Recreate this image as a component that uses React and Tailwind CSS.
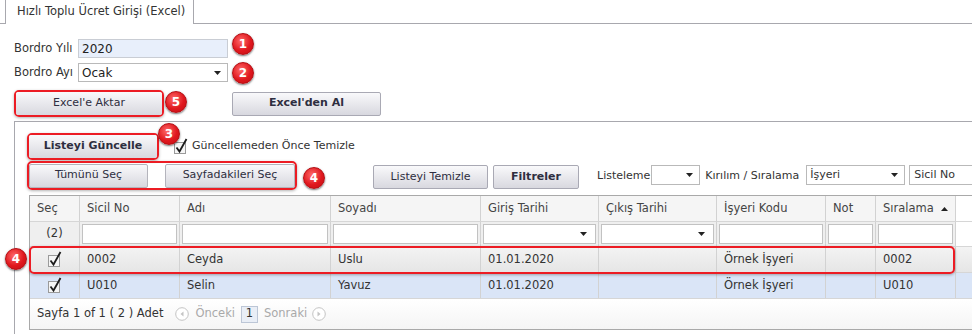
import clsx from "clsx";

const font = { fontFamily: '"DejaVu Sans", Verdana, sans-serif' };

function Badge({ n, className }) {
  return (
    <div
      className={clsx(
        "absolute z-10 flex h-[22px] w-[22px] items-center justify-center rounded-full border border-[#b30d12] bg-[radial-gradient(circle_at_40%_35%,#ff6a6a,#e0181e_55%,#c10f14)] text-[12px] font-bold text-white shadow-[0_1px_2px_rgba(0,0,0,0.55)]",
        className
      )}
    >
      {n}
    </div>
  );
}

function Btn({ className, bold, children }) {
  return (
    <div
      className={clsx(
        "flex shrink-0 items-center justify-center whitespace-nowrap rounded-[2px] border border-[#a9a9b4] bg-gradient-to-b from-[#f9f9fb] to-[#d8d8df] text-[11px] text-[#2e2e40]",
        bold && "font-bold",
        className
      )}
    >
      {children}
    </div>
  );
}

function RedBox({ className, children }) {
  return (
    <div
      className={clsx(
        "relative shrink-0 rounded-[5px] border-2 border-[#ec1c24] shadow-[0_1px_3px_rgba(0,0,0,0.3)]",
        className
      )}
    >
      {children}
    </div>
  );
}

function Arrow({ up }) {
  return (
    <svg width="7" height="4" viewBox="0 0 7 4" className="shrink-0">
      <path d={up ? "M0 4 L3.5 0 L7 4 Z" : "M0 0 L7 0 L3.5 4 Z"} fill="#222" />
    </svg>
  );
}

function Check() {
  return (
    <svg width="16" height="17" viewBox="0 0 16 17" className="shrink-0">
      <rect x="1.5" y="4.5" width="11" height="11" fill="#f6f6f6" stroke="#9a9a9a" />
      <path d="M3.5 9.5 L6.5 13.5 L13.5 1" fill="none" stroke="#1d1d1d" strokeWidth="1.8" />
    </svg>
  );
}

function NavCircle({ right }) {
  return (
    <svg width="14" height="14" viewBox="0 0 14 14">
      <circle cx="7" cy="7" r="6.3" fill="#fff" stroke="#c4c4c4" />
      <path d={right ? "M5.5 4.5 L8.5 7 L5.5 9.5 Z" : "M8.5 4.5 L5.5 7 L8.5 9.5 Z"} fill="#c4c4c4" />
    </svg>
  );
}

const cols = [
  { key: "sec", label: "Seç", w: "w-[50px]" },
  { key: "sicil", label: "Sicil No", w: "w-[100px]" },
  { key: "adi", label: "Adı", w: "w-[151px]" },
  { key: "soyadi", label: "Soyadı", w: "w-[150px]" },
  { key: "giris", label: "Giriş Tarihi", w: "w-[118px]", drop: true },
  { key: "cikis", label: "Çıkış Tarihi", w: "w-[118px]", drop: true },
  { key: "isyeri", label: "İşyeri Kodu", w: "w-[109px]" },
  { key: "not", label: "Not", w: "w-[50px]" },
  { key: "siralama", label: "Sıralama", w: "w-[80px]", sort: true },
];

const rows = [
  { sicil: "0002", adi: "Ceyda", soyadi: "Uslu", giris: "01.01.2020", cikis: "", isyeri: "Örnek İşyeri", not: "", siralama: "0002" },
  { sicil: "U010", adi: "Selin", soyadi: "Yavuz", giris: "01.01.2020", cikis: "", isyeri: "Örnek İşyeri", not: "", siralama: "U010" },
];

function GridRow({ row, className }) {
  return (
    <div className={clsx("flex h-[26px] border-b border-[#d6d6d6]", className)}>
      {cols.map((c) => (
        <div
          key={c.key}
          className={clsx(
            "flex shrink-0 items-center border-r border-[#d2d2d2] text-[11.5px] text-[#333]",
            c.w,
            c.key === "sec" ? "justify-center" : "pl-[7px]"
          )}
        >
          {c.key === "sec" ? <Check /> : row[c.key]}
        </div>
      ))}
    </div>
  );
}

export default function App() {
  return (
    <div className="h-[334px] w-[972px] overflow-hidden bg-white text-[11.5px] text-[#333]" style={font}>
      {/* tab strip */}
      <div className="flex h-[24px] border-b border-[#a8a8ae] pl-[5px]">
        <div className="-mb-px flex h-[24px] w-[189px] items-center border border-b-0 border-t-0 border-[#a8a8ae] bg-white pl-[11px] text-[11.5px] text-[#333]">
          Hızlı Toplu Ücret Girişi (Excel)
        </div>
      </div>

      <div className="pl-[14px] pt-[15px]">
        {/* Bordro Yılı */}
        <div className="flex h-[19px] items-center">
          <div className="w-[64px]">Bordro Yılı</div>
          <div className="relative flex h-[19px] w-[150px] items-center border border-[#c9cdd4] bg-[#e8effb] pl-[3px] text-[12px] text-[#222]">
            2020
            <Badge n="1" className="left-[153px] top-[-7px]" />
          </div>
        </div>
        {/* Bordro Ayı */}
        <div className="mt-[5px] flex h-[19px] items-center">
          <div className="w-[64px]">Bordro Ayı</div>
          <div className="relative flex h-[19px] w-[150px] items-center justify-between border border-[#b9b9b9] bg-white pl-[3px] pr-[6px] text-[12px] text-[#222]">
            Ocak
            <Arrow />
            <Badge n="2" className="left-[153px] top-[-2px]" />
          </div>
        </div>
        {/* Excel buttons */}
        <div className="mt-[8px] flex h-[27px] items-center">
          <RedBox className="h-[27px] w-[150px]">
            <Btn className="h-full w-full border-0">Excel'e Aktar</Btn>
            <Badge n="5" className="left-[149px] top-[-1px]" />
          </RedBox>
          <Btn bold className="ml-[68px] h-[24px] w-[149px]">Excel'den Al</Btn>
        </div>

        {/* panel */}
        <div className="mt-[4px] h-[220px] border-l border-t border-[#a8a8ae] pl-[12px] pt-[11px]">
          <div className="flex h-[27px] items-center">
            <RedBox className="h-[27px] w-[132px]">
              <Btn bold className="h-full w-full border-0">Listeyi Güncelle</Btn>
              <Badge n="3" className="left-[129px] top-[-12px]" />
            </RedBox>
            <div className="ml-[14px] flex items-center">
              <Check />
              <span className="ml-[3px] text-[11px] text-[#333]">Güncellemeden Önce Temizle</span>
            </div>
          </div>

          <div className="mt-[1px] flex h-[29px] items-start whitespace-nowrap text-[11px]">
            <RedBox className="flex h-[29px] w-[270px] items-center gap-[17px]">
              <Btn className="h-[24px] w-[119px] border-[#b4b4bc]">Tümünü Seç</Btn>
              <Btn className="h-[24px] w-[130px] border-[#b4b4bc]">Sayfadakileri Seç</Btn>
              <Badge n="4" className="left-[274px] top-[4px]" />
            </RedBox>
            <Btn className="ml-[76px] mt-[4px] h-[24px] w-[115px]">Listeyi Temizle</Btn>
            <Btn bold className="ml-[5px] mt-[4px] h-[24px] w-[86px]">Filtreler</Btn>
            <div className="ml-[18px] mt-[7px] shrink-0">Listeleme</div>
            <div className="ml-[1px] mt-[4px] flex h-[20px] w-[49px] shrink-0 items-center justify-end border border-[#b9b9b9] bg-white pr-[6px]">
              <Arrow />
            </div>
            <div className="ml-[5px] mt-[7px] shrink-0">Kırılım / Sıralama</div>
            <div className="ml-[7px] mt-[4px] flex h-[20px] w-[99px] shrink-0 items-center justify-between border border-[#b9b9b9] bg-white pl-[3px] pr-[6px]">
              İşyeri
              <Arrow />
            </div>
            <div className="ml-[4px] mt-[4px] flex h-[20px] w-[80px] shrink-0 items-center border border-[#b9b9b9] bg-white pl-[4px]">
              Sicil No
            </div>
          </div>

          {/* grid */}
          <div className="ml-[2px] mt-[5px] border-b border-l border-t border-[#a9a9a9]">
            <div className="flex h-[26px] border-b border-[#d6d6d6]">
              {cols.map((c) => (
                <div
                  key={c.key}
                  className={clsx(
                    "flex shrink-0 items-center justify-between border-r border-[#d2d2d2] bg-[#f5f5f5] pl-[7px] pr-[7px] text-[11.5px] text-[#444]",
                    c.w
                  )}
                >
                  {c.label}
                  {c.sort && <Arrow up />}
                </div>
              ))}
            </div>
            <div className="flex h-[25px] border-b border-[#d6d6d6]">
              {cols.map((c) => (
                <div
                  key={c.key}
                  className={clsx(
                    "flex shrink-0 items-center border-r border-[#d2d2d2] bg-[#efefef]",
                    c.w,
                    c.key === "sec" && "justify-center"
                  )}
                >
                  {c.key === "sec" ? (
                    <span className="text-[11.5px] text-[#333]">(2)</span>
                  ) : (
                    <div className="ml-[2px] mr-[2px] flex h-[20px] flex-1 items-center justify-end border border-[#c2c2c2] bg-white pr-[8px]">
                      {c.drop && <Arrow />}
                    </div>
                  )}
                </div>
              ))}
            </div>
            <div className="relative">
              <GridRow row={rows[0]} className="bg-gradient-to-b from-[#f3f3f3] to-[#e6e6e6]" />
              <div className="absolute left-[-1px] top-[-1px] h-[28px] w-[926px] rounded-[5px] border-2 border-[#ec1c24] shadow-[0_1px_3px_rgba(0,0,0,0.3)]" />
              <Badge n="4" className="left-[-25px] top-[1px]" />
            </div>
            <GridRow row={rows[1]} className="bg-[#dae5f7]" />
            <div className="flex h-[30px] items-center bg-gradient-to-b from-white to-[#f5f5f5] pl-[7px] text-[11.5px]">
              <span className="text-[#333]">Sayfa 1 of 1 ( 2 ) Adet</span>
              <span className="ml-[12px]"><NavCircle /></span>
              <span className="ml-[6px] text-[#a9a9a9]">Önceki</span>
              <span className="ml-[6px] flex h-[17px] w-[17px] items-center justify-center border border-[#bcc6d6] bg-[#e9eef6] text-[#333]">1</span>
              <span className="ml-[6px] text-[#a9a9a9]">Sonraki</span>
              <span className="ml-[5px]"><NavCircle right /></span>
            </div>
          </div>
        </div>
      </div>
    </div>
  );
}
